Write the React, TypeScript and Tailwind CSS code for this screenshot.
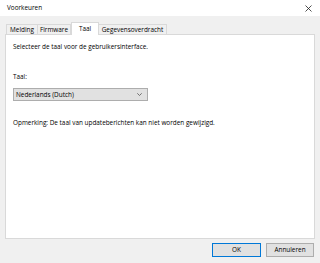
import React from "react";

const font = { fontFamily: '"Open Sans", "Noto Sans", sans-serif' };

function Tab({ label, w, selected }: { label: string; w: string; selected?: boolean }) {
  if (selected) {
    return (
      <div
        className={`${w} h-[13px] -mb-px z-10 bg-white border border-b-0 border-[#d9d9d9] flex items-start justify-center pt-[2px] text-[6.4px] leading-[8px] text-black`}
      >
        {label}
      </div>
    );
  }
  return (
    <div
      className={`${w} h-[10px] bg-[#f0f0f0] border border-b-0 border-[#d9d9d9] -ml-px first:ml-0 flex items-center justify-center text-[6.4px] leading-[8px] text-black`}
    >
      {label}
    </div>
  );
}

export default function App() {
  return (
    <div className="w-[320px] h-[263px] bg-[#f0f0f0] flex flex-col overflow-hidden" style={font}>
      <div className="h-[16px] bg-white flex items-center justify-between pl-[7px] pr-[8px] shrink-0">
        <span className="text-[6.4px] leading-[8px] text-black">Voorkeuren</span>
        <svg width="7" height="7" viewBox="0 0 7 7" className="block">
          <path d="M0.5 0.5 L6.5 6.5 M6.5 0.5 L0.5 6.5" stroke="#222" strokeWidth="0.8" fill="none" />
        </svg>
      </div>
      <div className="h-[18px] flex items-end pl-[6px] shrink-0">
        <Tab label="Melding" w="w-[32px]" />
        <Tab label="Firmware" w="w-[34px]" />
        <Tab label="Taal" w="w-[28px]" selected />
        <Tab label="Gegevensoverdracht" w="w-[69px]" />
      </div>
      <div className="mx-[5px] h-[205px] shrink-0 bg-white border border-[#d9d9d9] px-[7px] pt-[8px] flex flex-col text-[6.4px] leading-[8px] text-black">
        <div>Selecteer de taal voor de gebruikersinterface.</div>
        <div className="mt-[22px]">Taal:</div>
        <div className="mt-[7px] w-[135px] h-[13px] bg-[#e1e1e1] border border-[#adadad] flex items-center justify-between pl-[2px] pr-[5px]">
          <span>Nederlands (Dutch)</span>
          <svg width="5" height="3" viewBox="0 0 5 3" className="block">
            <path d="M0.3 0.3 L2.5 2.5 L4.7 0.3" stroke="#555" strokeWidth="0.8" fill="none" />
          </svg>
        </div>
        <div className="mt-[18px]">Opmerking: De taal van updateberichten kan niet worden gewijzigd.</div>
      </div>
      <div className="flex justify-end gap-[5px] pr-[6px] mt-[4px]">
        <button className="w-[49px] h-[14px] bg-[#e1e1e1] border border-[#0078d7] text-[6.4px] leading-[8px] text-black flex items-center justify-center">
          OK
        </button>
        <button className="w-[48px] h-[14px] bg-[#e1e1e1] border border-[#adadad] text-[6.4px] leading-[8px] text-black flex items-center justify-center">
          Annuleren
        </button>
      </div>
    </div>
  );
}
